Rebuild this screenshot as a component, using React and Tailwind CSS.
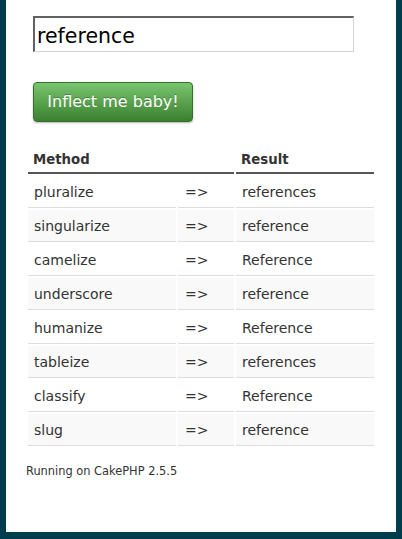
import React from 'react';

const rows = [
  ['pluralize', 'references'],
  ['singularize', 'reference'],
  ['camelize', 'Reference'],
  ['underscore', 'reference'],
  ['humanize', 'Reference'],
  ['tableize', 'references'],
  ['classify', 'Reference'],
  ['slug', 'reference'],
];

export default function App() {
  return (
    <div className="w-[402px] h-[539px] bg-[#003d4c] px-[6px] pb-[7px] font-['DejaVu_Sans',Verdana,sans-serif] text-[#333]">
      <div className="h-full bg-white pt-[16px] pl-[20px] pr-[20px]">
        <div className="pl-[7px]">
          <div className="w-[321px] h-[36px] border-2 border-t-[#626262] border-l-[#626262] border-r-[#d4d4d4] border-b-[#d4d4d4] border-r border-b flex items-center pl-[2px] pt-[4px] text-[20.5px] text-black leading-none">
            reference
          </div>
          <button className="mt-[30px] w-[160px] h-[40px] rounded-[4px] border border-[#356f2b] bg-gradient-to-b from-[#7ac56f] to-[#3a812f] text-white text-[16px] shadow-[0_1px_2px_rgba(0,0,0,0.3)] [text-shadow:0_-1px_0_rgba(0,0,0,0.25)]">
            Inflect me baby!
          </button>
        </div>
        <table className="mt-[22px] w-[350px] table-fixed border-separate border-spacing-[2px] text-[14px]">
          <colgroup>
            <col className="w-[148px]" />
            <col className="w-[56px]" />
            <col />
          </colgroup>
          <thead>
            <tr>
              <th colSpan={2} className="text-left font-bold text-[13.3px] leading-[18px] px-[5px] pt-[5px] pb-[3px] border-b-2 border-[#555]">
                Method
              </th>
              <th className="text-left font-bold text-[13.3px] leading-[18px] px-[5px] pt-[5px] pb-[3px] border-b-2 border-[#555]">
                Result
              </th>
            </tr>
          </thead>
          <tbody>
            {rows.map(([m, r], i) => (
              <tr key={m} className={i % 2 === 1 ? 'bg-[#f9f9f9]' : ''}>
                <td className="px-[6px] pt-[7px] pb-[5px] leading-[19px] border-b border-[#ddd]">{m}</td>
                <td className="px-[7px] pt-[7px] pb-[5px] leading-[19px] border-b border-[#ddd]">=&gt;</td>
                <td className="px-[6px] pt-[7px] pb-[5px] leading-[19px] border-b border-[#ddd]">{r}</td>
              </tr>
            ))}
          </tbody>
        </table>
        <div className="mt-[16px] text-[11.4px] leading-[14px]">Running on CakePHP 2.5.5</div>
      </div>
    </div>
  );
}
